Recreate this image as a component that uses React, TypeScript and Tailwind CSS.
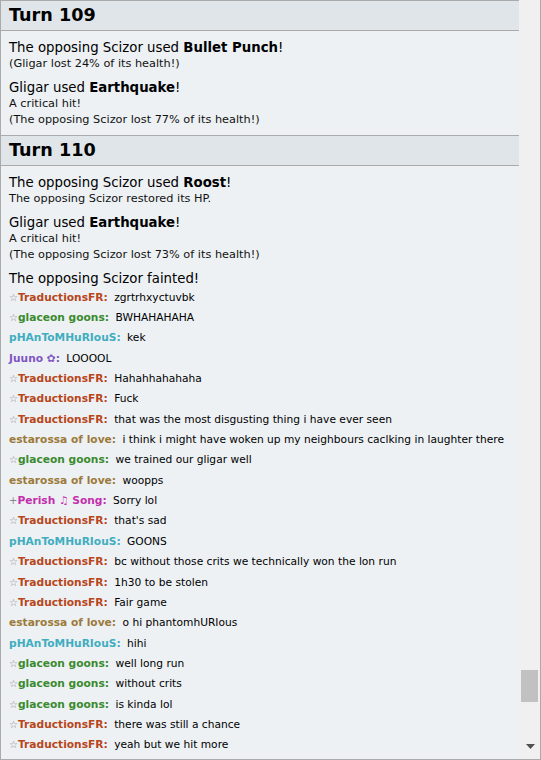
import React from 'react';

type ChatLine = { group?: string; user: string; msg: string };

// Name colours, written out in full so Tailwind picks them up
const userColors: Record<string, string> = {
  TraductionsFR: 'text-[#b8461a]',
  'glaceon goons': 'text-[#3a8a2e]',
  pHAnToMHuRIouS: 'text-[#3fadbf]',
  'Juuno ✿': 'text-[#8155c4]',
  'estarossa of love': 'text-[#9c7a3a]',
  'Perish ♫ Song': 'text-[#c42fac]',
};

const chat: ChatLine[] = [
  { group: '☆', user: 'TraductionsFR', msg: 'zgrtrhxyctuvbk' },
  { group: '☆', user: 'glaceon goons', msg: 'BWHAHAHAHA' },
  { user: 'pHAnToMHuRIouS', msg: 'kek' },
  { user: 'Juuno ✿', msg: 'LOOOOL' },
  { group: '☆', user: 'TraductionsFR', msg: 'Hahahhahahaha' },
  { group: '☆', user: 'TraductionsFR', msg: 'Fuck' },
  { group: '☆', user: 'TraductionsFR', msg: 'that was the most disgusting thing i have ever seen' },
  { user: 'estarossa of love', msg: 'i think i might have woken up my neighbours caclking in laughter there' },
  { group: '☆', user: 'glaceon goons', msg: 'we trained our gligar well' },
  { user: 'estarossa of love', msg: 'woopps' },
  { group: '+', user: 'Perish ♫ Song', msg: 'Sorry lol' },
  { group: '☆', user: 'TraductionsFR', msg: "that's sad" },
  { user: 'pHAnToMHuRIouS', msg: 'GOONS' },
  { group: '☆', user: 'TraductionsFR', msg: 'bc without those crits we technically won the lon run' },
  { group: '☆', user: 'TraductionsFR', msg: '1h30 to be stolen' },
  { group: '☆', user: 'TraductionsFR', msg: 'Fair game' },
  { user: 'estarossa of love', msg: 'o hi phantomhURIous' },
  { user: 'pHAnToMHuRIouS', msg: 'hihi' },
  { group: '☆', user: 'glaceon goons', msg: 'well long run' },
  { group: '☆', user: 'glaceon goons', msg: 'without crits' },
  { group: '☆', user: 'glaceon goons', msg: 'is kinda lol' },
  { group: '☆', user: 'TraductionsFR', msg: 'there was still a chance' },
  { group: '☆', user: 'TraductionsFR', msg: 'yeah but we hit more' },
];

const TurnHeader: React.FC<{ n: number }> = ({ n }) => (
  <h2 className="h-[31px] border-y border-[#aaa] bg-[#dfe5e9] px-[8px] text-[17.6px] font-bold leading-[29px] text-black">
    Turn {n}
  </h2>
);

const Main: React.FC<{ children: React.ReactNode }> = ({ children }) => (
  <div className="text-[13.3px] leading-[16px] text-black">{children}</div>
);

const Small: React.FC<{ children: React.ReactNode }> = ({ children }) => (
  <div className="text-[11.3px] leading-[16px] text-[#111]">{children}</div>
);

const Block: React.FC<{ children: React.ReactNode }> = ({ children }) => (
  <div className="mt-[8px] first:mt-0">{children}</div>
);

const App: React.FC = () => {
  return (
    <div
      className="flex h-[760px] w-[541px] overflow-hidden border-x border-b border-[#aaa] bg-[#edf1f4]"
      style={{ fontFamily: '"DejaVu Sans", Verdana, sans-serif' }}
    >
      <div className="w-[518px] shrink-0 overflow-hidden">
        <TurnHeader n={109} />
        <div className="px-[8px] pt-[9px] pb-[7px]">
          <Block>
            <Main>
              The opposing Scizor used <strong>Bullet Punch</strong>!
            </Main>
            <Small>(Gligar lost 24% of its health!)</Small>
          </Block>
          <Block>
            <Main>
              Gligar used <strong>Earthquake</strong>!
            </Main>
            <Small>A critical hit!</Small>
            <Small>(The opposing Scizor lost 77% of its health!)</Small>
          </Block>
        </div>

        <TurnHeader n={110} />
        <div className="px-[8px] pt-[8.5px]">
          <Block>
            <Main>
              The opposing Scizor used <strong>Roost</strong>!
            </Main>
            <Small>The opposing Scizor restored its HP.</Small>
          </Block>
          <Block>
            <Main>
              Gligar used <strong>Earthquake</strong>!
            </Main>
            <Small>A critical hit!</Small>
            <Small>(The opposing Scizor lost 73% of its health!)</Small>
          </Block>
          <Block>
            <Main>The opposing Scizor fainted!</Main>
          </Block>

          <div className="pt-[1px]">
            {chat.map((line, i) => (
              <div key={i} className="whitespace-nowrap py-[3px] text-[10.67px] leading-[14.36px] text-black">
                <strong className={userColors[line.user]}>
                  {line.group && <small className="text-[10px] font-normal text-[#888]">{line.group}</small>}
                  {line.user}:
                </strong>{' '}
                <em className="pl-[3px] not-italic">{line.msg}</em>
              </div>
            ))}
          </div>
        </div>
      </div>

      {/* scrollbar */}
      <div className="flex flex-1 flex-col bg-[#f0f0f0]">
        <div className="mt-[670px] ml-[2px] h-[32px] w-[17px] bg-[#c1c1c1]" />
        <div className="mt-auto mb-[10px] flex justify-center pl-[1px]">
          <svg width="9" height="5" viewBox="0 0 9 5">
            <path d="M0 0 H9 L4.5 5 Z" fill="#505050" />
          </svg>
        </div>
      </div>
    </div>
  );
};

export default App;
